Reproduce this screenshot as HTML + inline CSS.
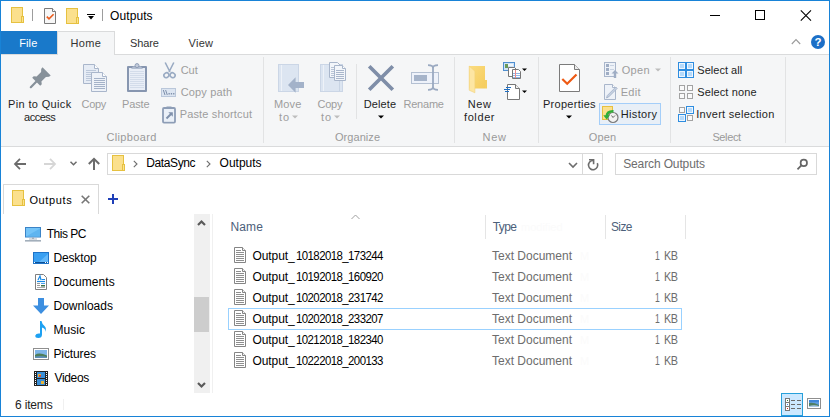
<!DOCTYPE html>
<html><head><meta charset="utf-8"><style>
html,body{margin:0;padding:0;}
body{width:830px;height:417px;position:relative;overflow:hidden;background:#fff;font-family:"Liberation Sans",sans-serif;font-size:12px;}
.a{position:absolute;box-sizing:content-box;}
svg.a{display:block;overflow:visible;}
.t{position:absolute;white-space:nowrap;font-size:11px;line-height:14px;}
</style></head><body>
<div class="a" style="left:0;top:54px;width:830px;height:92px;background:#f5f6f7;border-top:1px solid #dadbdc;border-bottom:1px solid #dadbdc;top:54px;height:91px"></div>
<svg class="a" style="left:11px;top:7px" width="14" height="16" viewBox="0 0 14 16"><rect x="0.5" y="0.5" width="11" height="15" fill="#fbe08d" stroke="#e6c140"/><rect x="10.5" y="9.5" width="2" height="6" fill="#fbe28f" stroke="#e6c140"/></svg>
<div class="a" style="left:32px;top:9px;width:1px;height:12px;background:#9d9d9d"></div>
<svg class="a" style="left:44px;top:8px" width="12" height="16" viewBox="0 0 12 16"><path d="M0.5 0.5H8.5L11.5 3.5V15.5H0.5Z" fill="#f7f7f7" stroke="#7a7a7a"/><path d="M8.5 0.5V3.5H11.5" fill="#fff" stroke="#7a7a7a"/><path d="M2.8 8.6L5 10.8L9.6 6.2" fill="none" stroke="#ea5b1c" stroke-width="1.6"/></svg>
<svg class="a" style="left:66px;top:8px" width="14" height="16" viewBox="0 0 14 16"><rect x="0.5" y="0.5" width="11" height="15" fill="#fbe08d" stroke="#e6c140"/><rect x="10.5" y="9.5" width="2" height="6" fill="#fbe28f" stroke="#e6c140"/></svg>
<svg class="a" style="left:87px;top:13px" width="8" height="8" viewBox="0 0 8 8"><rect x="0" y="1" width="8" height="1" fill="#000"/><path d="M1 3H7L4 6.5Z" fill="#000"/></svg>
<div class="a" style="left:102px;top:9px;width:1px;height:12px;background:#9d9d9d"></div>
<div class="a" style="left:710px;top:15px;width:10px;height:1px;background:#000"></div>
<div class="a" style="left:755px;top:10px;width:8px;height:8px;border:1px solid #000"></div>
<svg class="a" style="left:800px;top:10px" width="12" height="11" viewBox="0 0 12 11"><path d="M0.8 0.3L11 10.6M11 0.3L0.8 10.6" stroke="#000" stroke-width="1.1"/></svg>
<div class="a" style="left:1px;top:31px;width:56px;height:23px;background:#1979ca"></div>
<div class="a" style="left:57px;top:31px;width:56px;height:23px;background:#f5f6f7;border:1px solid #dadbdc;border-bottom:none"></div>
<svg class="a" style="left:791px;top:38px" width="10" height="7" viewBox="0 0 10 7"><path d="M0.8 6L5 1.6L9.2 6" fill="none" stroke="#9a9a9a" stroke-width="1.1"/></svg>
<svg class="a" style="left:811px;top:35px" width="14" height="14" viewBox="0 0 14 14"><circle cx="7" cy="7" r="7" fill="#1c6fc7"/><text x="7" y="11.3" font-family="Liberation Sans" font-weight="bold" font-size="11.5" fill="#fff" text-anchor="middle">?</text></svg>
<div class="a" style="left:263px;top:57px;width:1px;height:86px;background:#e2e3e4"></div>
<div class="a" style="left:356px;top:64px;width:1px;height:55px;background:#e2e3e4"></div>
<div class="a" style="left:454px;top:57px;width:1px;height:86px;background:#e2e3e4"></div>
<div class="a" style="left:538px;top:57px;width:1px;height:86px;background:#e2e3e4"></div>
<div class="a" style="left:670px;top:57px;width:1px;height:86px;background:#e2e3e4"></div>
<div class="a" style="left:785px;top:57px;width:1px;height:86px;background:#e2e3e4"></div>
<svg class="a" style="left:29px;top:67px" width="22" height="22" viewBox="0 0 22 22"><path d="M13.5 0.3L21.7 8.5L20 9.8L16.9 9.9L12.4 14.4L12.8 17.3L11.2 18.8L3.2 10.8L4.7 9.2L7.6 9.6L12.1 5.1L12.2 2Z" fill="#87919a"/><path d="M7.2 14.8L1.8 20.2" stroke="#87919a" stroke-width="2.2" stroke-linecap="round"/></svg>
<svg class="a" style="left:83px;top:64px" width="25" height="28" viewBox="0 0 25 28"><path d="M0.5 0.5H11.5L15.5 4.5V19.5H0.5Z" fill="#e6ecf5" stroke="#a9b6cb"/><path d="M11.5 0.5V4.5H15.5" fill="#fff" stroke="#a9b6cb"/><line x1="3" x2="13" y1="6.5" y2="6.5" stroke="#bcc8da"/><line x1="3" x2="13" y1="8.5" y2="8.5" stroke="#bcc8da"/><line x1="3" x2="13" y1="10.5" y2="10.5" stroke="#bcc8da"/><line x1="3" x2="13" y1="12.5" y2="12.5" stroke="#bcc8da"/><line x1="3" x2="13" y1="14.5" y2="14.5" stroke="#bcc8da"/><line x1="3" x2="13" y1="16.5" y2="16.5" stroke="#bcc8da"/><path d="M8.5 8.5H19.5L23.5 12.5V27.5H8.5Z" fill="#eef2f8" stroke="#a9b6cb"/><path d="M19.5 8.5V12.5H23.5" fill="#fff" stroke="#a9b6cb"/><line x1="11" x2="22" y1="14.5" y2="14.5" stroke="#a4b2c8"/><line x1="11" x2="22" y1="16.5" y2="16.5" stroke="#a4b2c8"/><line x1="11" x2="22" y1="18.5" y2="18.5" stroke="#a4b2c8"/><line x1="11" x2="22" y1="20.5" y2="20.5" stroke="#a4b2c8"/><line x1="11" x2="22" y1="22.5" y2="22.5" stroke="#a4b2c8"/><line x1="11" x2="22" y1="24.5" y2="24.5" stroke="#a4b2c8"/></svg>
<svg class="a" style="left:127px;top:63px" width="20" height="29" viewBox="0 0 20 29"><rect x="0" y="3" width="20" height="26" rx="1" fill="#8796b0"/><rect x="2" y="5" width="16" height="22" fill="#e9eef7"/><line x1="3" x2="17" y1="8.5" y2="8.5" stroke="#d3dcea"/><line x1="3" x2="17" y1="10.5" y2="10.5" stroke="#d3dcea"/><line x1="3" x2="17" y1="12.5" y2="12.5" stroke="#d3dcea"/><line x1="3" x2="17" y1="14.5" y2="14.5" stroke="#d3dcea"/><line x1="3" x2="17" y1="16.5" y2="16.5" stroke="#d3dcea"/><line x1="3" x2="17" y1="18.5" y2="18.5" stroke="#d3dcea"/><line x1="3" x2="17" y1="20.5" y2="20.5" stroke="#d3dcea"/><line x1="3" x2="17" y1="22.5" y2="22.5" stroke="#d3dcea"/><line x1="3" x2="17" y1="24.5" y2="24.5" stroke="#d3dcea"/><path d="M4 6L6 3.5H14L16 6Z" fill="#b1bdd0"/><circle cx="10" cy="2.6" r="2" fill="#c3ccdb" stroke="#8f9db6"/></svg>
<svg class="a" style="left:163px;top:62px" width="13" height="17" viewBox="0 0 13 17"><path d="M2.2 0.5L7 10M10.8 0.5L6 10" stroke="#9aabc3" stroke-width="1.6" fill="none"/><ellipse cx="3.4" cy="13.2" rx="2.6" ry="2.3" transform="rotate(-35 3.4 13.2)" fill="none" stroke="#9aabc3" stroke-width="1.6"/><ellipse cx="9.6" cy="13.2" rx="2.6" ry="2.3" transform="rotate(35 9.6 13.2)" fill="none" stroke="#9aabc3" stroke-width="1.6"/></svg>
<svg class="a" style="left:161px;top:88px" width="15" height="9" viewBox="0 0 15 9"><rect x="0.5" y="0.5" width="14" height="8" fill="#dce5f1" stroke="#bac7da"/><path d="M2.3 2L4 7M4.6 2L6.3 7" stroke="#7f90ab" stroke-width="1"/><rect x="7.5" y="5" width="1.3" height="1.5" fill="#7f90ab"/><rect x="9.8" y="5" width="1.3" height="1.5" fill="#7f90ab"/><rect x="12.1" y="5" width="1.3" height="1.5" fill="#7f90ab"/></svg>
<svg class="a" style="left:162px;top:106px" width="14" height="17" viewBox="0 0 14 17"><rect x="1" y="2" width="12" height="14.5" rx="1" fill="none" stroke="#8d9db6" stroke-width="1.8"/><rect x="2" y="3" width="10" height="12.6" fill="#eaf0f8"/><rect x="4.5" y="0.5" width="5" height="2.5" fill="#8d9db6"/><path d="M4.5 12.5L9 8" stroke="#7f90ab" stroke-width="2"/><path d="M6.3 6.2H10.8V10.7Z" fill="#7f90ab"/></svg>
<svg class="a" style="left:278px;top:64px" width="27" height="30" viewBox="0 0 27 30"><rect x="0.5" y="0.5" width="20" height="27" fill="#dce5f1" stroke="#cbd6e6"/><line x1="3.5" y1="1" x2="3.5" y2="27" stroke="#eef2f8"/><path d="M10 21L17.6 13.3V17.9H26V23.9H17.6V28.7Z" fill="#a3b2c9"/></svg>
<svg class="a" style="left:306px;top:62px" width="41" height="31" viewBox="0 0 41 31"><rect x="14.5" y="2.5" width="22" height="27" fill="#dce5f1" stroke="#cbd6e6"/><line x1="17.5" y1="3" x2="17.5" y2="29" stroke="#eef2f8"/><line x1="33.5" y1="3" x2="33.5" y2="29" stroke="#c8d4e4"/><path d="M23.5 0.5H31.5L34.5 3.5V15.5H23.5Z" fill="#f3f6fa" stroke="#a9b6cb"/><line x1="25" x2="28" y1="5.5" y2="5.5" stroke="#b8c4d6"/><line x1="25" x2="28" y1="7.5" y2="7.5" stroke="#b8c4d6"/><line x1="25" x2="28" y1="9.5" y2="9.5" stroke="#b8c4d6"/><line x1="25" x2="28" y1="11.5" y2="11.5" stroke="#b8c4d6"/><line x1="25" x2="28" y1="13.5" y2="13.5" stroke="#b8c4d6"/><path d="M28.5 3.5H36.5L39.5 6.5V18.5H28.5Z" fill="#f3f6fa" stroke="#a9b6cb"/><path d="M36.5 3.5V6.5H39.5" fill="#fff" stroke="#a9b6cb"/><line x1="30" x2="38" y1="8.5" y2="8.5" stroke="#a9b6cb"/><line x1="30" x2="38" y1="10.5" y2="10.5" stroke="#a9b6cb"/><line x1="30" x2="38" y1="12.5" y2="12.5" stroke="#a9b6cb"/><line x1="30" x2="38" y1="14.5" y2="14.5" stroke="#a9b6cb"/><line x1="30" x2="38" y1="16.5" y2="16.5" stroke="#a9b6cb"/></svg>
<svg class="a" style="left:292px;top:115px" width="6" height="4" viewBox="0 0 6 4"><path d="M0 0.5H6L3 3.5Z" fill="#bdbdbd"/></svg>
<svg class="a" style="left:334px;top:115px" width="6" height="4" viewBox="0 0 6 4"><path d="M0 0.5H6L3 3.5Z" fill="#bdbdbd"/></svg>
<svg class="a" style="left:368px;top:65px" width="26" height="26" viewBox="0 0 26 26"><path d="M1.2 1.2L24.8 24.8M24.8 1.2L1.2 24.8" stroke="#7f8ea8" stroke-width="3.7"/></svg>
<svg class="a" style="left:378px;top:115px" width="6" height="4" viewBox="0 0 6 4"><path d="M0 0.5H6L3 3.5Z" fill="#000"/></svg>
<svg class="a" style="left:410px;top:64px" width="30" height="27" viewBox="0 0 30 27"><rect x="1.5" y="8.5" width="27" height="11" fill="#eef2fa" stroke="#b4c0d2"/><rect x="4" y="11" width="13" height="6" fill="#a6b4ca"/><path d="M18 1.2Q23 1.2 23 4V23Q23 25.8 18 25.8M28 1.2Q23 1.2 23 4V23Q23 25.8 28 25.8" stroke="#9aa9c1" stroke-width="1.8" fill="none"/></svg>
<svg class="a" style="left:468px;top:65px" width="20" height="29" viewBox="0 0 20 29"><defs><linearGradient id="nfg" x1="0" y1="0" x2="1" y2="1"><stop offset="0" stop-color="#fbdc80"/><stop offset="1" stop-color="#f5cc5c"/></linearGradient></defs><rect x="1" y="1" width="16" height="22.5" fill="url(#nfg)"/><rect x="17" y="15" width="2" height="8.5" fill="#f5cf63"/><path d="M1.2 1L6.9 6.2V27.8L1.2 25.2Z" fill="#fde6a3" stroke="#f1d27a" stroke-width="0.6"/></svg>
<svg class="a" style="left:503px;top:62px" width="26" height="17" viewBox="0 0 26 17"><rect x="0.5" y="0.5" width="11" height="8" fill="#cfe3f7" stroke="#4f8fd0"/><rect x="2" y="2" width="3" height="4" fill="#6a9a5a"/><rect x="5" y="2" width="5" height="2" fill="#f0f6fc"/><path d="M5.5 5.5H11.5L13.5 7.5V14.5H5.5Z" fill="#fff" stroke="#777"/><path d="M9.5 7.5H15.5L17.5 9.5V16.5H9.5Z" fill="#fff" stroke="#777"/><line x1="10" x2="17" y1="11.5" y2="11.5" stroke="#8fb5e6"/><line x1="10" x2="17" y1="13.5" y2="13.5" stroke="#8fb5e6"/><line x1="10" x2="17" y1="15.5" y2="15.5" stroke="#8fb5e6"/><line x1="12.5" x2="12.5" y1="8" y2="16" stroke="#e88"/><path d="M19 6.5H24L21.5 9Z" fill="#000"/></svg>
<svg class="a" style="left:503px;top:84px" width="26" height="16" viewBox="0 0 26 16"><path d="M4.5 0.5H12.5L16.5 4.5V15.5H4.5Z" fill="#fff" stroke="#777"/><path d="M12.5 0.5V4.5H16.5" fill="#f0f0f0" stroke="#777"/><path d="M3 3.5H8M1 5.5H7M2 7.5H6" stroke="#1f6fc4" stroke-width="1"/><path d="M19 6.5H24L21.5 9Z" fill="#000"/></svg>
<svg class="a" style="left:559px;top:64px" width="22" height="28" viewBox="0 0 22 28"><path d="M0.5 0.5H15.5L20.5 5.5V27.5H0.5Z" fill="#fff" stroke="#7b7b7b"/><path d="M15.5 0.5V5.5H20.5" fill="#ececec" stroke="#7b7b7b"/><path d="M3.3 15L8.2 19.8L17.5 10.5" fill="none" stroke="#ee5a14" stroke-width="2.2"/></svg>
<svg class="a" style="left:566px;top:115px" width="6" height="4" viewBox="0 0 6 4"><path d="M0 0.5H6L3 3.5Z" fill="#000"/></svg>
<svg class="a" style="left:604px;top:62px" width="15" height="16" viewBox="0 0 15 16"><rect x="0.5" y="0.5" width="11" height="14" fill="#eef2f8" stroke="#a9b6cb"/><rect x="2" y="2" width="3" height="3" fill="#9fadc4"/><rect x="2" y="6" width="3" height="3" fill="#9fadc4"/><rect x="2" y="10" width="3" height="3" fill="#9fadc4"/><line x1="6" x2="10" y1="3.5" y2="3.5" stroke="#c9d3e2"/><line x1="6" x2="10" y1="7.5" y2="7.5" stroke="#c9d3e2"/><path d="M7.5 11.5L11 8L14.5 11.5H12.2V16H9.8V11.5Z" fill="#9fadc4"/></svg>
<svg class="a" style="left:655px;top:68px" width="6" height="4" viewBox="0 0 6 4"><path d="M0 0.5H6L3 3.5Z" fill="#bdbdbd"/></svg>
<svg class="a" style="left:604px;top:84px" width="14" height="16" viewBox="0 0 14 16"><path d="M0.5 0.5H8.5L11.5 3.5V15.5H0.5Z" fill="#eef2f8" stroke="#a9b6cb"/><path d="M8.5 0.5V3.5H11.5" fill="#fff" stroke="#a9b6cb"/><path d="M2.5 14L3.3 11.5L11.8 3L13.2 4.4L4.7 12.9Z" fill="#c6d1e2" stroke="#a2b0c6" stroke-width="0.8"/></svg>
<div class="a" style="left:599px;top:103px;width:60px;height:20px;background:#e8eff7;border:1px solid #a4cef9"></div>
<svg class="a" style="left:602px;top:106px" width="17" height="17" viewBox="0 0 17 17"><rect x="0.5" y="0.5" width="10" height="13" fill="#fbe08d" stroke="#e6c140"/><circle cx="11" cy="11.5" r="5" fill="#f2f2f2" stroke="#7a7a7a" stroke-width="1.2"/><path d="M9.5 9.5L11 11.5L13 9.5" stroke="#555" fill="none" stroke-width="0.9"/><path d="M11.5 5.3Q5 5 4.6 10.5" stroke="#2fae3a" stroke-width="2.4" fill="none"/><path d="M1.3 9.3H8L4.6 13.6Z" fill="#2fae3a"/></svg>
<svg class="a" style="left:678px;top:62px" width="16" height="16" viewBox="0 0 16 16"><rect x="0" y="0" width="16" height="16" fill="#2e8de0"/><rect x="1" y="1" width="6" height="6" fill="#eef6fe"/><rect x="2" y="2" width="4" height="4" fill="#b5dafb"/><rect x="1" y="9" width="6" height="6" fill="#eef6fe"/><rect x="2" y="10" width="4" height="4" fill="#b5dafb"/><rect x="9" y="1" width="6" height="6" fill="#eef6fe"/><rect x="10" y="2" width="4" height="4" fill="#b5dafb"/><rect x="9" y="9" width="6" height="6" fill="#eef6fe"/><rect x="10" y="10" width="4" height="4" fill="#b5dafb"/></svg>
<svg class="a" style="left:678px;top:84px" width="16" height="16" viewBox="0 0 16 16"><rect x="1.5" y="1.5" width="5" height="5" fill="#fafafa" stroke="#a3a3a3"/><rect x="9.5" y="1.5" width="5" height="5" fill="#fafafa" stroke="#a3a3a3"/><rect x="1.5" y="9.5" width="5" height="5" fill="#fafafa" stroke="#a3a3a3"/><rect x="9.5" y="9.5" width="5" height="5" fill="#fafafa" stroke="#a3a3a3"/></svg>
<svg class="a" style="left:678px;top:106px" width="16" height="16" viewBox="0 0 16 16"><rect x="1.5" y="1.5" width="5" height="5" fill="#fafafa" stroke="#a3a3a3"/><rect x="8" y="0" width="8" height="8" fill="#2e8de0"/><rect x="9" y="1" width="6" height="6" fill="#eef6fe"/><rect x="10" y="2" width="4" height="4" fill="#b5dafb"/><rect x="0" y="8" width="8" height="8" fill="#2e8de0"/><rect x="1" y="9" width="6" height="6" fill="#eef6fe"/><rect x="2" y="10" width="4" height="4" fill="#b5dafb"/><rect x="9.5" y="9.5" width="5" height="5" fill="#fafafa" stroke="#a3a3a3"/></svg>
<svg class="a" style="left:14px;top:158px" width="13" height="12" viewBox="0 0 13 12"><path d="M6 0.8L1 6L6 11.2M1 6H12" fill="none" stroke="#6b6b6b" stroke-width="1.8"/></svg>
<svg class="a" style="left:44px;top:158px" width="13" height="12" viewBox="0 0 13 12"><path d="M6 0.8L11 6L6 11.2M11 6H0" fill="none" stroke="#d6d6d6" stroke-width="1.8"/></svg>
<svg class="a" style="left:70px;top:161px" width="7" height="5" viewBox="0 0 7 5"><path d="M0.5 0.8L3.5 3.8L6.5 0.8" fill="none" stroke="#6b6b6b" stroke-width="1.5"/></svg>
<svg class="a" style="left:88px;top:158px" width="12" height="12" viewBox="0 0 12 12"><path d="M0.8 6L6 0.8L11.2 6M6 1V12" fill="none" stroke="#6b6b6b" stroke-width="2"/></svg>
<div class="a" style="left:107px;top:153px;width:494px;height:20px;border:1px solid #d9d9d9;background:#fff"></div>
<div class="a" style="left:582px;top:154px;width:1px;height:20px;background:#d9d9d9"></div>
<svg class="a" style="left:112px;top:155px" width="14" height="16" viewBox="0 0 14 16"><rect x="0.5" y="0.5" width="11" height="15" fill="#fbe08d" stroke="#e6c140"/><rect x="10.5" y="9.5" width="2" height="6" fill="#fbe28f" stroke="#e6c140"/></svg>
<svg class="a" style="left:133px;top:160px" width="5" height="8" viewBox="0 0 5 8"><path d="M0.8 0.8L4 4L0.8 7.2" fill="none" stroke="#6d6d6d" stroke-width="1.1"/></svg>
<svg class="a" style="left:206px;top:160px" width="5" height="8" viewBox="0 0 5 8"><path d="M0.8 0.8L4 4L0.8 7.2" fill="none" stroke="#6d6d6d" stroke-width="1.1"/></svg>
<svg class="a" style="left:568px;top:162px" width="10" height="6" viewBox="0 0 10 6"><path d="M1 1L5 5L9 1" fill="none" stroke="#6d6d6d" stroke-width="1.6"/></svg>
<svg class="a" style="left:587px;top:159px" width="12" height="12" viewBox="0 0 12 12"><path d="M6.1 1.5A4.6 4.6 0 1 0 10.3 4.2" fill="none" stroke="#6d6d6d" stroke-width="1.6"/><path d="M2 0.8H6.6V5.2" fill="none" stroke="#6d6d6d" stroke-width="1.6"/></svg>
<div class="a" style="left:615px;top:153px;width:200px;height:20px;border:1px solid #d9d9d9;background:#fff"></div>
<svg class="a" style="left:797px;top:157px" width="12" height="12" viewBox="0 0 12 12"><circle cx="6.8" cy="5.9" r="3.2" fill="none" stroke="#666" stroke-width="1.7"/><path d="M4.6 8.2L0.5 12.3" stroke="#666" stroke-width="1.8"/></svg>
<div class="a" style="left:3px;top:184px;width:94px;height:29px;border:1px solid #d9d9d9;border-bottom:none;background:#fff"></div>
<svg class="a" style="left:12px;top:190px" width="14" height="16" viewBox="0 0 14 16"><rect x="0.5" y="0.5" width="11" height="15" fill="#fbe08d" stroke="#e6c140"/><rect x="10.5" y="9.5" width="2" height="6" fill="#fbe28f" stroke="#e6c140"/></svg>
<svg class="a" style="left:81px;top:195px" width="9" height="9" viewBox="0 0 9 9"><path d="M0.7 0.7L8.3 8.3M8.3 0.7L0.7 8.3" stroke="#777" stroke-width="1.6"/></svg>
<svg class="a" style="left:108px;top:194px" width="10" height="10" viewBox="0 0 10 10"><path d="M5 0V10M0 5H10" stroke="#1f3fb8" stroke-width="2"/></svg>
<svg class="a" style="left:25px;top:227px" width="16" height="15" viewBox="0 0 16 15"><rect x="0.5" y="0.5" width="15" height="9.5" fill="#74c4f8" stroke="#3b83c6"/><path d="M1 9.5L15 1.5V9.5Z" fill="#5fb5f0"/><rect x="7" y="10.5" width="2" height="1.5" fill="#9aa8b6"/><rect x="4" y="11.5" width="8" height="1" fill="#b0bac4"/><rect x="0" y="13" width="16" height="1.6" fill="#a3afbb"/></svg>
<svg class="a" style="left:33px;top:252px" width="16" height="12" viewBox="0 0 16 12"><rect x="0" y="0" width="16" height="12" fill="#1e73c8"/><rect x="1" y="1" width="14" height="9" fill="#3aa0f2"/><path d="M6 10L15 2V10Z" fill="#63b8fa"/><rect x="1" y="10" width="14" height="1" fill="#0d4f94"/><rect x="1" y="10" width="1" height="1" fill="#fff"/><rect x="12" y="10" width="1" height="1" fill="#fff"/><rect x="14" y="10" width="1" height="1" fill="#fff"/></svg>
<svg class="a" style="left:35px;top:274px" width="12" height="16" viewBox="0 0 12 16"><path d="M0.5 0.5H8.5L11.5 3.5V15.5H0.5Z" fill="#fff" stroke="#808080"/><path d="M3 6L5 2L6 6" fill="none" stroke="#1a8ae6" stroke-width="1.2"/><line x1="6.5" x2="10" y1="5.5" y2="5.5" stroke="#1a8ae6"/><line x1="2" x2="10" y1="7.5" y2="7.5" stroke="#1a8ae6" stroke-width="1.2"/><line x1="2" x2="5" y1="9.5" y2="9.5" stroke="#999"/><rect x="6" y="9" width="4" height="1" fill="#4aa3ee"/><line x1="2" x2="5" y1="11.5" y2="11.5" stroke="#999"/><rect x="6" y="11" width="4" height="1.5" fill="#3d6e4a"/><line x1="2" x2="10" y1="13.5" y2="13.5" stroke="#aaa"/></svg>
<svg class="a" style="left:33px;top:298px" width="16" height="16" viewBox="0 0 16 16"><path d="M5 0H11V7.5H16L8 16L0 7.5H5Z" fill="#3d8fe0"/></svg>
<svg class="a" style="left:35px;top:321px" width="12" height="17" viewBox="0 0 12 17"><path d="M5 0H6.5Q7 3 9.5 5Q12 7.5 10 11Q11 7.5 7 6.5V13.5Q7 17 3.3 17Q0 17 0.3 14.5Q1 12 5 12.5Z" fill="#1da1f2"/></svg>
<svg class="a" style="left:33px;top:348px" width="16" height="12" viewBox="0 0 16 12"><rect x="0.5" y="0.5" width="15" height="11" fill="#fff" stroke="#8f8f8f"/><rect x="2" y="2" width="12" height="8" fill="#7fb6e8"/><path d="M2 7Q6 4 14 7.5V10H2Z" fill="#4f7f5a"/><path d="M2 8.5Q8 7.5 14 9V10H2Z" fill="#5d8fb8"/></svg>
<svg class="a" style="left:34px;top:371px" width="14" height="15" viewBox="0 0 14 15"><rect x="0" y="0" width="14" height="15" fill="#222"/><rect x="3" y="1" width="8" height="6" fill="#3a8fd8"/><rect x="3" y="8" width="8" height="6" fill="#3a8fd8"/><rect x="4" y="3" width="3" height="3" fill="#e8b53a"/><rect x="7" y="10" width="3" height="3" fill="#e8b53a"/><rect x="5" y="4" width="2" height="2" fill="#d24a3a"/><rect x="1" y="1" width="1" height="1" fill="#fff"/><rect x="12" y="1" width="1" height="1" fill="#fff"/><rect x="1" y="3" width="1" height="1" fill="#fff"/><rect x="12" y="3" width="1" height="1" fill="#fff"/><rect x="1" y="5" width="1" height="1" fill="#fff"/><rect x="12" y="5" width="1" height="1" fill="#fff"/><rect x="1" y="7" width="1" height="1" fill="#fff"/><rect x="12" y="7" width="1" height="1" fill="#fff"/><rect x="1" y="9" width="1" height="1" fill="#fff"/><rect x="12" y="9" width="1" height="1" fill="#fff"/><rect x="1" y="11" width="1" height="1" fill="#fff"/><rect x="12" y="11" width="1" height="1" fill="#fff"/><rect x="1" y="13" width="1" height="1" fill="#fff"/><rect x="12" y="13" width="1" height="1" fill="#fff"/></svg>
<div class="a" style="left:194px;top:214px;width:16px;height:179px;background:#f0f0f0"></div>
<div class="a" style="left:194px;top:297px;width:15px;height:35px;background:#cdcdcd"></div>
<svg class="a" style="left:197px;top:219px" width="9" height="7" viewBox="0 0 9 7"><path d="M1 6L4.5 2.5L8 6" fill="none" stroke="#5a5a5a" stroke-width="2.2"/></svg>
<svg class="a" style="left:197px;top:382px" width="9" height="7" viewBox="0 0 9 7"><path d="M1 1L4.5 4.5L8 1" fill="none" stroke="#5a5a5a" stroke-width="2.2"/></svg>
<div class="a" style="left:212px;top:214px;width:1px;height:179px;background:#f0f0f0"></div>
<svg class="a" style="left:351px;top:214px" width="9" height="6" viewBox="0 0 9 6"><path d="M0.5 5L4.5 1L8.5 5" fill="none" stroke="#a0a0a0" stroke-width="1"/></svg>
<div class="a" style="left:485px;top:215px;width:1px;height:24px;background:#e5e5e5"></div>
<div class="a" style="left:605px;top:215px;width:1px;height:24px;background:#e5e5e5"></div>
<div class="a" style="left:685px;top:215px;width:1px;height:24px;background:#e5e5e5"></div>
<span class="t" style="left:521px;top:220px;color:#fbfbfb">modified</span>
<div class="a" style="left:228px;top:308px;width:452px;height:20px;border:1px solid #99d1ff"></div>
<svg class="a" style="left:234px;top:247px" width="12" height="16" viewBox="0 0 12 16"><path d="M0.5 0.5H8.5L11.5 3.5V15.5H0.5Z" fill="#fff" stroke="#858585"/><path d="M8.5 0.5V3.5H11.5" fill="#f4f4f4" stroke="#858585"/><line x1="2" x2="7" y1="3.5" y2="3.5" stroke="#8e8e8e"/><line x1="2" x2="10" y1="5.5" y2="5.5" stroke="#8e8e8e"/><line x1="2" x2="10" y1="7.5" y2="7.5" stroke="#8e8e8e"/><line x1="2" x2="10" y1="9.5" y2="9.5" stroke="#8e8e8e"/><line x1="2" x2="10" y1="11.5" y2="11.5" stroke="#8e8e8e"/><line x1="2" x2="10" y1="13.5" y2="13.5" stroke="#8e8e8e"/></svg>
<span class="t" style="left:580px;top:249px;color:#fbfbfb">M</span>
<svg class="a" style="left:234px;top:268px" width="12" height="16" viewBox="0 0 12 16"><path d="M0.5 0.5H8.5L11.5 3.5V15.5H0.5Z" fill="#fff" stroke="#858585"/><path d="M8.5 0.5V3.5H11.5" fill="#f4f4f4" stroke="#858585"/><line x1="2" x2="7" y1="3.5" y2="3.5" stroke="#8e8e8e"/><line x1="2" x2="10" y1="5.5" y2="5.5" stroke="#8e8e8e"/><line x1="2" x2="10" y1="7.5" y2="7.5" stroke="#8e8e8e"/><line x1="2" x2="10" y1="9.5" y2="9.5" stroke="#8e8e8e"/><line x1="2" x2="10" y1="11.5" y2="11.5" stroke="#8e8e8e"/><line x1="2" x2="10" y1="13.5" y2="13.5" stroke="#8e8e8e"/></svg>
<span class="t" style="left:580px;top:270px;color:#fbfbfb">M</span>
<svg class="a" style="left:234px;top:289px" width="12" height="16" viewBox="0 0 12 16"><path d="M0.5 0.5H8.5L11.5 3.5V15.5H0.5Z" fill="#fff" stroke="#858585"/><path d="M8.5 0.5V3.5H11.5" fill="#f4f4f4" stroke="#858585"/><line x1="2" x2="7" y1="3.5" y2="3.5" stroke="#8e8e8e"/><line x1="2" x2="10" y1="5.5" y2="5.5" stroke="#8e8e8e"/><line x1="2" x2="10" y1="7.5" y2="7.5" stroke="#8e8e8e"/><line x1="2" x2="10" y1="9.5" y2="9.5" stroke="#8e8e8e"/><line x1="2" x2="10" y1="11.5" y2="11.5" stroke="#8e8e8e"/><line x1="2" x2="10" y1="13.5" y2="13.5" stroke="#8e8e8e"/></svg>
<span class="t" style="left:580px;top:291px;color:#fbfbfb">M</span>
<svg class="a" style="left:234px;top:310px" width="12" height="16" viewBox="0 0 12 16"><path d="M0.5 0.5H8.5L11.5 3.5V15.5H0.5Z" fill="#fff" stroke="#858585"/><path d="M8.5 0.5V3.5H11.5" fill="#f4f4f4" stroke="#858585"/><line x1="2" x2="7" y1="3.5" y2="3.5" stroke="#8e8e8e"/><line x1="2" x2="10" y1="5.5" y2="5.5" stroke="#8e8e8e"/><line x1="2" x2="10" y1="7.5" y2="7.5" stroke="#8e8e8e"/><line x1="2" x2="10" y1="9.5" y2="9.5" stroke="#8e8e8e"/><line x1="2" x2="10" y1="11.5" y2="11.5" stroke="#8e8e8e"/><line x1="2" x2="10" y1="13.5" y2="13.5" stroke="#8e8e8e"/></svg>
<span class="t" style="left:580px;top:312px;color:#fbfbfb">M</span>
<svg class="a" style="left:234px;top:331px" width="12" height="16" viewBox="0 0 12 16"><path d="M0.5 0.5H8.5L11.5 3.5V15.5H0.5Z" fill="#fff" stroke="#858585"/><path d="M8.5 0.5V3.5H11.5" fill="#f4f4f4" stroke="#858585"/><line x1="2" x2="7" y1="3.5" y2="3.5" stroke="#8e8e8e"/><line x1="2" x2="10" y1="5.5" y2="5.5" stroke="#8e8e8e"/><line x1="2" x2="10" y1="7.5" y2="7.5" stroke="#8e8e8e"/><line x1="2" x2="10" y1="9.5" y2="9.5" stroke="#8e8e8e"/><line x1="2" x2="10" y1="11.5" y2="11.5" stroke="#8e8e8e"/><line x1="2" x2="10" y1="13.5" y2="13.5" stroke="#8e8e8e"/></svg>
<span class="t" style="left:580px;top:333px;color:#fbfbfb">M</span>
<svg class="a" style="left:234px;top:352px" width="12" height="16" viewBox="0 0 12 16"><path d="M0.5 0.5H8.5L11.5 3.5V15.5H0.5Z" fill="#fff" stroke="#858585"/><path d="M8.5 0.5V3.5H11.5" fill="#f4f4f4" stroke="#858585"/><line x1="2" x2="7" y1="3.5" y2="3.5" stroke="#8e8e8e"/><line x1="2" x2="10" y1="5.5" y2="5.5" stroke="#8e8e8e"/><line x1="2" x2="10" y1="7.5" y2="7.5" stroke="#8e8e8e"/><line x1="2" x2="10" y1="9.5" y2="9.5" stroke="#8e8e8e"/><line x1="2" x2="10" y1="11.5" y2="11.5" stroke="#8e8e8e"/><line x1="2" x2="10" y1="13.5" y2="13.5" stroke="#8e8e8e"/></svg>
<span class="t" style="left:580px;top:354px;color:#fbfbfb">M</span>
<div class="a" style="left:63px;top:399px;width:1px;height:11px;background:#f0f0f0"></div>
<div class="a" style="left:781px;top:393px;width:20px;height:21px;background:#cce8ff;border:1px solid #26a0da"></div>
<svg class="a" style="left:785px;top:398px" width="16" height="13" viewBox="0 0 16 13"><rect x="0.5" y="0.5" width="4" height="12" fill="#fff" stroke="#777"/><line x1="0" x2="5" y1="4.5" y2="4.5" stroke="#777"/><line x1="0" x2="5" y1="8.5" y2="8.5" stroke="#777"/><rect x="2" y="2" width="1" height="1" fill="#3a7a3a"/><rect x="2" y="6" width="1" height="1" fill="#3a8ae0"/><rect x="2" y="10" width="1" height="1" fill="#d22"/><path d="M6 2.5H10M12 2.5H16M6 6.5H10M12 6.5H16M6 10.5H10M12 10.5H16" stroke="#6a6a6a"/></svg>
<svg class="a" style="left:807px;top:398px" width="14" height="11" viewBox="0 0 14 11"><rect x="0.5" y="0.5" width="13" height="10" fill="#fff" stroke="#8f8f8f"/><rect x="2" y="2" width="10" height="7" fill="#5b9be0"/><rect x="2" y="2" width="10" height="2" fill="#3f86d8"/><path d="M2 5Q6 4 12 7V9H2Z" fill="#4f7f63"/><path d="M2 8Q7 6.5 12 8V9H2Z" fill="#a9c8e6"/></svg>
<span class="t" style="left:110.0px;top:9px;color:#000;font-size:12px;letter-spacing:0.10px;">Outputs</span>
<span class="t" style="left:19.2px;top:36px;color:#fff;font-size:11px;letter-spacing:0.13px;">File</span>
<span class="t" style="left:70.4px;top:36px;color:#333;font-size:11px;letter-spacing:0.40px;">Home</span>
<span class="t" style="left:130.0px;top:36px;color:#333;font-size:11px;letter-spacing:-0.12px;">Share</span>
<span class="t" style="left:188.5px;top:36px;color:#333;font-size:11px;letter-spacing:0.30px;">View</span>
<span class="t" style="left:8.1px;top:97px;color:#1e1e1e;font-size:11px;letter-spacing:0.34px;">Pin to Quick</span>
<span class="t" style="left:24.0px;top:110px;color:#1e1e1e;font-size:11px;letter-spacing:-0.48px;">access</span>
<span class="t" style="left:81.5px;top:97px;color:#9d9d9d;font-size:11px;letter-spacing:-0.27px;">Copy</span>
<span class="t" style="left:122.1px;top:97px;color:#9d9d9d;font-size:11px;letter-spacing:-0.15px;">Paste</span>
<span class="t" style="left:180.7px;top:63px;color:#9d9d9d;font-size:11px;letter-spacing:-0.05px;">Cut</span>
<span class="t" style="left:180.7px;top:85px;color:#9d9d9d;font-size:11px;letter-spacing:0.16px;">Copy path</span>
<span class="t" style="left:179.7px;top:107px;color:#9d9d9d;font-size:11px;letter-spacing:0.15px;">Paste shortcut</span>
<span class="t" style="left:106.4px;top:130px;color:#9a9a9a;font-size:11px;letter-spacing:0.36px;">Clipboard</span>
<span class="t" style="left:273.9px;top:97px;color:#9d9d9d;font-size:11px;letter-spacing:0.20px;">Move</span>
<span class="t" style="left:279.0px;top:110px;color:#9d9d9d;font-size:11px;letter-spacing:1.00px;">to</span>
<span class="t" style="left:317.6px;top:97px;color:#9d9d9d;font-size:11px;letter-spacing:-0.27px;">Copy</span>
<span class="t" style="left:321.0px;top:110px;color:#9d9d9d;font-size:11px;letter-spacing:1.00px;">to</span>
<span class="t" style="left:363.7px;top:97px;color:#1e1e1e;font-size:11px;letter-spacing:0.14px;">Delete</span>
<span class="t" style="left:403.5px;top:97px;color:#9d9d9d;font-size:11px;letter-spacing:-0.22px;">Rename</span>
<span class="t" style="left:334.9px;top:130px;color:#9a9a9a;font-size:11px;letter-spacing:0.07px;">Organize</span>
<span class="t" style="left:467.7px;top:97px;color:#1e1e1e;font-size:11px;letter-spacing:0.65px;">New</span>
<span class="t" style="left:464.0px;top:110px;color:#1e1e1e;font-size:11px;letter-spacing:0.60px;">folder</span>
<span class="t" style="left:482.4px;top:130px;color:#9a9a9a;font-size:11px;letter-spacing:0.80px;">New</span>
<span class="t" style="left:543.0px;top:97px;color:#1e1e1e;font-size:11px;letter-spacing:0.27px;">Properties</span>
<span class="t" style="left:621.7px;top:63px;color:#9d9d9d;font-size:11px;letter-spacing:0.33px;">Open</span>
<span class="t" style="left:620.7px;top:85px;color:#9d9d9d;font-size:11px;letter-spacing:0.33px;">Edit</span>
<span class="t" style="left:620.7px;top:107px;color:#1e1e1e;font-size:11px;letter-spacing:0.35px;">History</span>
<span class="t" style="left:588.7px;top:130px;color:#9a9a9a;font-size:11px;letter-spacing:0.20px;">Open</span>
<span class="t" style="left:697.3px;top:63px;color:#1e1e1e;font-size:11px;letter-spacing:0.02px;">Select all</span>
<span class="t" style="left:697.3px;top:85px;color:#1e1e1e;font-size:11px;letter-spacing:0.11px;">Select none</span>
<span class="t" style="left:696.3px;top:107px;color:#1e1e1e;font-size:11px;letter-spacing:0.27px;">Invert selection</span>
<span class="t" style="left:712.4px;top:130px;color:#9a9a9a;font-size:11px;letter-spacing:-0.38px;">Select</span>
<span class="t" style="left:146.3px;top:156px;color:#000;font-size:12px;letter-spacing:-0.40px;">DataSync</span>
<span class="t" style="left:219.6px;top:156px;color:#000;font-size:12px;letter-spacing:0.00px;">Outputs</span>
<span class="t" style="left:623.2px;top:157px;color:#6d6d6d;font-size:12px;letter-spacing:-0.13px;">Search Outputs</span>
<span class="t" style="left:29.4px;top:193px;color:#000;font-size:11px;letter-spacing:0.65px;">Outputs</span>
<span class="t" style="left:46.7px;top:227px;color:#000;font-size:12px;letter-spacing:-0.48px;">This PC</span>
<span class="t" style="left:53.4px;top:251px;color:#000;font-size:12px;letter-spacing:-0.13px;">Desktop</span>
<span class="t" style="left:53.4px;top:275px;color:#000;font-size:12px;letter-spacing:0.08px;">Documents</span>
<span class="t" style="left:53.5px;top:299px;color:#000;font-size:12px;letter-spacing:0.01px;">Downloads</span>
<span class="t" style="left:53.4px;top:323px;color:#000;font-size:12px;letter-spacing:0.05px;">Music</span>
<span class="t" style="left:53.4px;top:347px;color:#000;font-size:12px;letter-spacing:-0.09px;">Pictures</span>
<span class="t" style="left:54.4px;top:371px;color:#000;font-size:12px;letter-spacing:-0.30px;">Videos</span>
<span class="t" style="left:230.6px;top:220px;color:#4c607a;font-size:12px;letter-spacing:0.07px;">Name</span>
<span class="t" style="left:492.7px;top:220px;color:#4c607a;font-size:12px;letter-spacing:-0.57px;">Type</span>
<span class="t" style="left:611.0px;top:220px;color:#4c607a;font-size:12px;letter-spacing:-0.60px;transform:scaleX(0.9901);transform-origin:0 0;">Size</span>
<span class="t" style="left:252.5px;top:249px;color:#000;font-size:12px;letter-spacing:-0.08px;">Output_</span>
<span class="t" style="left:296.2px;top:249px;color:#000;font-size:12px;letter-spacing:-0.60px;transform:scaleX(0.9525);transform-origin:0 0;">10182018_173244</span>
<span class="t" style="left:492.0px;top:249px;color:#6d6d6d;font-size:12px;letter-spacing:0.00px;">Text Document</span>
<span class="t" style="left:655.0px;top:249px;color:#6d6d6d;font-size:12px;letter-spacing:-0.60px;transform:scaleX(0.7167);transform-origin:0 0;">1</span>
<span class="t" style="left:663.8px;top:249px;color:#6d6d6d;font-size:12px;letter-spacing:-0.60px;transform:scaleX(0.9028);transform-origin:0 0;">KB</span>
<span class="t" style="left:252.5px;top:270px;color:#000;font-size:12px;letter-spacing:-0.08px;">Output_</span>
<span class="t" style="left:296.2px;top:270px;color:#000;font-size:12px;letter-spacing:-0.60px;transform:scaleX(0.9525);transform-origin:0 0;">10192018_160920</span>
<span class="t" style="left:492.0px;top:270px;color:#6d6d6d;font-size:12px;letter-spacing:0.00px;">Text Document</span>
<span class="t" style="left:655.0px;top:270px;color:#6d6d6d;font-size:12px;letter-spacing:-0.60px;transform:scaleX(0.7167);transform-origin:0 0;">1</span>
<span class="t" style="left:663.8px;top:270px;color:#6d6d6d;font-size:12px;letter-spacing:-0.60px;transform:scaleX(0.9028);transform-origin:0 0;">KB</span>
<span class="t" style="left:252.5px;top:291px;color:#000;font-size:12px;letter-spacing:-0.08px;">Output_</span>
<span class="t" style="left:296.2px;top:291px;color:#000;font-size:12px;letter-spacing:-0.60px;transform:scaleX(0.9525);transform-origin:0 0;">10202018_231742</span>
<span class="t" style="left:492.0px;top:291px;color:#6d6d6d;font-size:12px;letter-spacing:0.00px;">Text Document</span>
<span class="t" style="left:655.0px;top:291px;color:#6d6d6d;font-size:12px;letter-spacing:-0.60px;transform:scaleX(0.7167);transform-origin:0 0;">1</span>
<span class="t" style="left:663.8px;top:291px;color:#6d6d6d;font-size:12px;letter-spacing:-0.60px;transform:scaleX(0.9028);transform-origin:0 0;">KB</span>
<span class="t" style="left:252.5px;top:312px;color:#000;font-size:12px;letter-spacing:-0.08px;">Output_</span>
<span class="t" style="left:296.2px;top:312px;color:#000;font-size:12px;letter-spacing:-0.60px;transform:scaleX(0.9525);transform-origin:0 0;">10202018_233207</span>
<span class="t" style="left:492.0px;top:312px;color:#6d6d6d;font-size:12px;letter-spacing:0.00px;">Text Document</span>
<span class="t" style="left:655.0px;top:312px;color:#6d6d6d;font-size:12px;letter-spacing:-0.60px;transform:scaleX(0.7167);transform-origin:0 0;">1</span>
<span class="t" style="left:663.8px;top:312px;color:#6d6d6d;font-size:12px;letter-spacing:-0.60px;transform:scaleX(0.9028);transform-origin:0 0;">KB</span>
<span class="t" style="left:252.5px;top:333px;color:#000;font-size:12px;letter-spacing:-0.08px;">Output_</span>
<span class="t" style="left:296.2px;top:333px;color:#000;font-size:12px;letter-spacing:-0.60px;transform:scaleX(0.9525);transform-origin:0 0;">10212018_182340</span>
<span class="t" style="left:492.0px;top:333px;color:#6d6d6d;font-size:12px;letter-spacing:0.00px;">Text Document</span>
<span class="t" style="left:655.0px;top:333px;color:#6d6d6d;font-size:12px;letter-spacing:-0.60px;transform:scaleX(0.7167);transform-origin:0 0;">1</span>
<span class="t" style="left:663.8px;top:333px;color:#6d6d6d;font-size:12px;letter-spacing:-0.60px;transform:scaleX(0.9028);transform-origin:0 0;">KB</span>
<span class="t" style="left:252.5px;top:354px;color:#000;font-size:12px;letter-spacing:-0.08px;">Output_</span>
<span class="t" style="left:296.2px;top:354px;color:#000;font-size:12px;letter-spacing:-0.60px;transform:scaleX(0.9525);transform-origin:0 0;">10222018_200133</span>
<span class="t" style="left:492.0px;top:354px;color:#6d6d6d;font-size:12px;letter-spacing:0.00px;">Text Document</span>
<span class="t" style="left:655.0px;top:354px;color:#6d6d6d;font-size:12px;letter-spacing:-0.60px;transform:scaleX(0.7167);transform-origin:0 0;">1</span>
<span class="t" style="left:663.8px;top:354px;color:#6d6d6d;font-size:12px;letter-spacing:-0.60px;transform:scaleX(0.9028);transform-origin:0 0;">KB</span>
<span class="t" style="left:15.0px;top:398px;color:#1e1e1e;font-size:12px;letter-spacing:-0.17px;">6 items</span>
<div class="a" style="left:0;top:0;width:828px;height:415px;border:1px solid #1883d7;pointer-events:none"></div>
</body></html>
